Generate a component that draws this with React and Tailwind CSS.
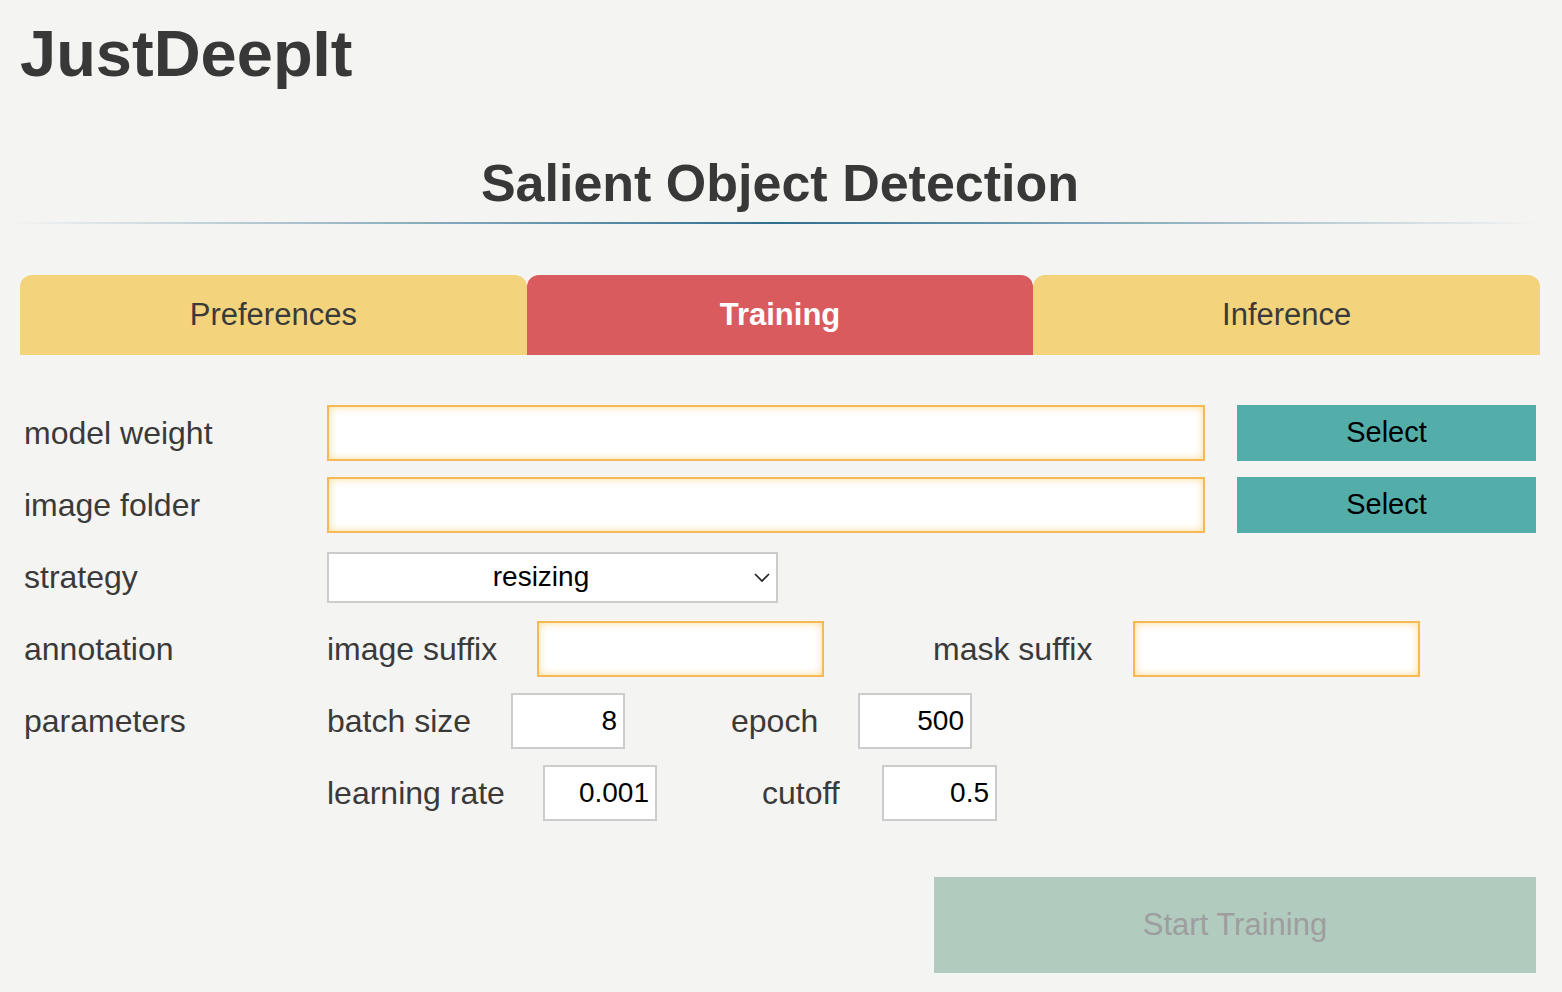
import React from "react";

const font = { fontFamily: '"Liberation Sans", Arial, Helvetica, sans-serif' };

const TextBox = ({ className = "" }) => (
  <input
    type="text"
    className={`h-14 border-2 border-[#f6b955] bg-white shadow-[inset_0_0_9px_#fcdc9a] outline-none ${className}`}
  />
);

const NumberBox = ({ value, className = "" }) => (
  <input
    type="text"
    defaultValue={value}
    className={`h-14 w-[114px] border-2 border-[#cccccc] bg-white pr-[6px] text-right text-[28px] text-black outline-none ${className}`}
  />
);

const Tab = ({ label, active }) => (
  <div
    className={`flex h-20 flex-1 items-center justify-center rounded-t-[12px] text-[31px] ${
      active ? "bg-[#d95b5e] font-bold text-white" : "bg-[#f3d47c] text-[#3a3a3a]"
    }`}
  >
    {label}
  </div>
);

const Row = ({ label, children }) => (
  <div className="flex h-14 items-center">
    <div className="w-[303px] text-[32px] text-[#3a3a3a]">{label}</div>
    {children}
  </div>
);

export default function App() {
  return (
    <div className="min-h-screen bg-[#f4f4f2] pl-5 pr-[22px]" style={font}>
      <h1 className="pt-[21px] text-[65px] font-bold leading-none text-[#383838]">JustDeepIt</h1>

      <h2 className="mt-[71px] text-center text-[52px] font-bold leading-none text-[#383838]">
        Salient Object Detection
      </h2>
      <div className="mt-[13px] ml-[-10px] h-[2px] bg-gradient-to-r from-transparent via-[#2e6d8e] to-transparent" />

      <div className="mt-[51px] flex">
        <Tab label="Preferences" />
        <Tab label="Training" active />
        <Tab label="Inference" />
      </div>

      <div className="mt-[50px] flex flex-col gap-4 px-1">
        <Row label="model weight">
          <TextBox className="w-[878px]" />
          <button className="ml-8 h-14 w-[299px] bg-[#53ada9] text-[29px] text-black">Select</button>
        </Row>
        <Row label="image folder">
          <TextBox className="w-[878px]" />
          <button className="ml-8 h-14 w-[299px] bg-[#53ada9] text-[29px] text-black">Select</button>
        </Row>
        <Row label="strategy">
          <div className="flex h-[51px] w-[451px] items-center border-2 border-[#cccccc] bg-white">
            <span className="flex-1 text-center text-[28px] text-black">resizing</span>
            <svg className="mr-[5px] h-[18px] w-[18px]" viewBox="0 0 18 18" fill="none" stroke="#222" strokeWidth="1.7">
              <path d="M2 6l7 7 7-7" />
            </svg>
          </div>
        </Row>
        <Row label="annotation">
          <span className="w-[210px] text-[32px] text-[#3a3a3a]">image suffix</span>
          <TextBox className="w-[287px]" />
          <span className="ml-[109px] w-[200px] text-[32px] text-[#3a3a3a]">mask suffix</span>
          <TextBox className="w-[287px]" />
        </Row>
        <Row label="parameters">
          <span className="w-[184px] text-[32px] text-[#3a3a3a]">batch size</span>
          <NumberBox value="8" />
          <span className="ml-[106px] w-[127px] text-[32px] text-[#3a3a3a]">epoch</span>
          <NumberBox value="500" />
        </Row>
        <Row label="">
          <span className="w-[216px] text-[32px] text-[#3a3a3a]">learning rate</span>
          <NumberBox value="0.001" />
          <span className="ml-[105px] w-[120px] text-[32px] text-[#3a3a3a]">cutoff</span>
          <NumberBox value="0.5" className="w-[115px]" />
        </Row>
        <div className="mt-[40px] flex justify-end">
          <button disabled className="h-24 w-[602px] bg-[#b1cbbe] text-[31px] text-[#9e9e9e]">
            Start Training
          </button>
        </div>
      </div>
    </div>
  );
}
